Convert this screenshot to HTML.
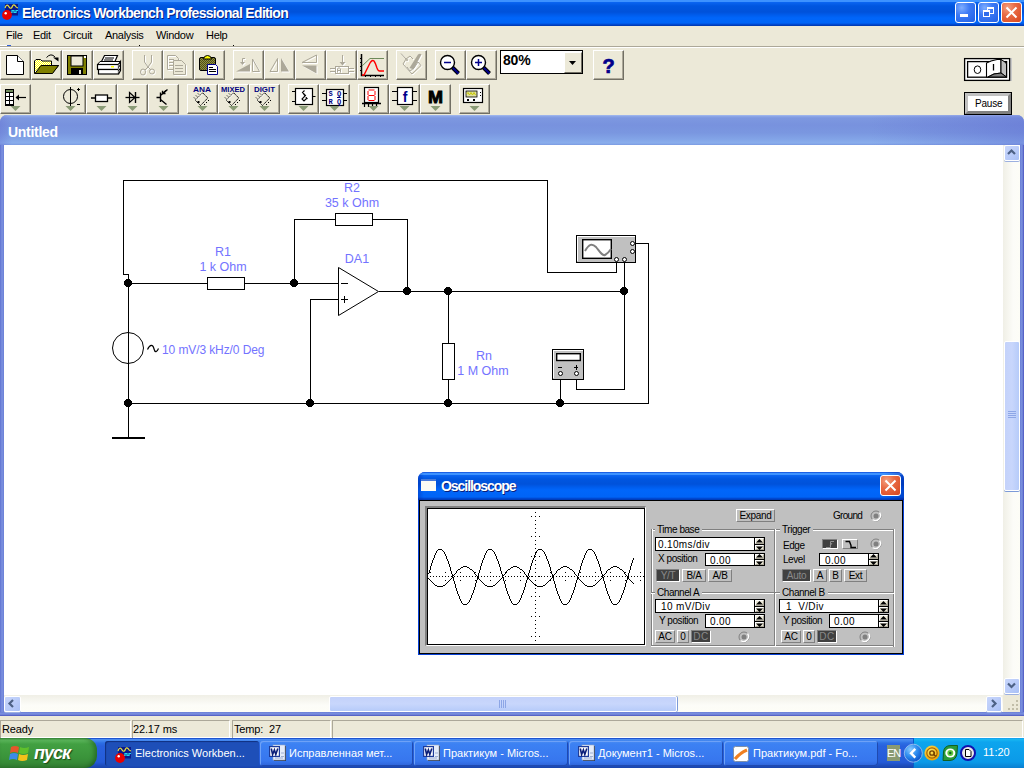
<!DOCTYPE html>
<html><head><meta charset="utf-8"><title>Electronics Workbench</title>
<style>
html,body{margin:0;padding:0;}
body{width:1024px;height:768px;position:relative;overflow:hidden;background:#ECE9D8;font-family:'Liberation Sans', sans-serif;font-size:11px;color:#000;}
div{box-sizing:border-box;}
svg{position:absolute;overflow:visible;}
.tb{position:absolute;width:31px;height:30px;background:#ECE9D8;border-top:1px solid #fff;border-left:1px solid #fff;border-right:1px solid #716F64;border-bottom:1px solid #716F64;box-shadow:inset -1px -1px 0 #ACA899;}
.mi{position:absolute;top:31px;font-size:11px;}
</style></head><body>

<div style="position:absolute;left:0px;top:0px;width:1024px;height:26px;background:linear-gradient(to bottom,#3D92FF 0px,#3D92FF 1.5px,#0A64F0 2.5px,#0056E0 6px,#0052DA 12px,#005CEC 15px,#0066FA 18px,#0064F6 23px,#0048D0 24.5px,#0036A8 26px);"></div>
<div style="position:absolute;left:22px;top:5px;white-space:nowrap;font-weight:bold;font-size:14px;color:#fff;letter-spacing:-0.68px;text-shadow:1px 1px 0 #0A1E7A;">Electronics Workbench Professional Edition</div>
<svg style="left:0;top:0" width="24" height="24"><rect x="5" y="4" width="13" height="11.5" fill="#0A1A8A"/><path d="M5 8 Q6.5 4 8 5.5 Q9 7 10 8 Q11.5 9 12.5 6 Q13.5 4 15 5.5 Q16 7.5 18 8" fill="none" stroke="#E8E040" stroke-width="1.2"/><path d="M10 12.5 H12 V10.5 H14 V12.5 H16 V10.5 H18" fill="none" stroke="#20D8F0" stroke-width="1.2"/><circle cx="7" cy="15" r="4.9" fill="#E80000"/><circle cx="5.7" cy="13.2" r="1.2" fill="#fff"/></svg>
<div style="position:absolute;left:955px;top:2px;width:21px;height:21px;border:1px solid #fff;border-radius:3px;background:radial-gradient(circle at 30% 25%,#7FAEFF 0%,#3C7AF5 40%,#2160E5 100%);"></div><div style="position:absolute;left:960px;top:14px;width:8px;height:3px;background:#fff;"></div>
<div style="position:absolute;left:978px;top:2px;width:21px;height:21px;border:1px solid #fff;border-radius:3px;background:radial-gradient(circle at 30% 25%,#7FAEFF 0%,#3C7AF5 40%,#2160E5 100%);"></div><div style="position:absolute;left:987px;top:7px;width:7px;height:7px;border:1px solid #fff;border-top-width:2px;"></div><div style="position:absolute;left:983px;top:10px;width:7px;height:7px;border:1px solid #fff;border-top-width:2px;background:#2F6CEB;"></div>
<div style="position:absolute;left:1001px;top:2px;width:21px;height:21px;border:1px solid #fff;border-radius:3px;background:radial-gradient(circle at 30% 25%,#F4A080 0%,#E86A44 40%,#D8461E 100%);"></div><svg style="left:1001px;top:2px" width="21" height="21"><path d="M5.5 5.5 L15.5 15.5 M15.5 5.5 L5.5 15.5" stroke="#fff" stroke-width="2"/></svg>
<div style="position:absolute;left:6px;top:29px;white-space:nowrap;font-size:11px;letter-spacing:-0.3px;">File</div>
<div style="position:absolute;left:33px;top:29px;white-space:nowrap;font-size:11px;letter-spacing:-0.3px;">Edit</div>
<div style="position:absolute;left:63px;top:29px;white-space:nowrap;font-size:11px;letter-spacing:-0.3px;">Circuit</div>
<div style="position:absolute;left:105px;top:29px;white-space:nowrap;font-size:11px;letter-spacing:-0.3px;">Analysis</div>
<div style="position:absolute;left:156px;top:29px;white-space:nowrap;font-size:11px;letter-spacing:-0.3px;">Window</div>
<div style="position:absolute;left:206px;top:29px;white-space:nowrap;font-size:11px;letter-spacing:-0.3px;">Help</div>
<div style="position:absolute;left:0px;top:46px;width:1024px;height:1px;background:#ACA899;"></div>
<div style="position:absolute;left:0px;top:45px;width:7px;height:1px;background:#fff;"></div>
<div style="position:absolute;left:7px;top:45px;width:4px;height:1px;background:#2F5FD8;"></div>
<div style="position:absolute;left:139px;top:45px;width:1px;height:1px;background:#000;"></div>
<div style="position:absolute;left:233px;top:45px;width:1px;height:1px;background:#000;"></div>
<div style="position:absolute;left:0px;top:47px;width:1024px;height:1px;background:#fff;"></div>
<div class="tb" style="left:0px;top:50px"></div>
<div class="tb" style="left:31px;top:50px"></div>
<div class="tb" style="left:62px;top:50px"></div>
<div class="tb" style="left:93px;top:50px"></div>
<div class="tb" style="left:132px;top:50px"></div>
<div class="tb" style="left:163px;top:50px"></div>
<div class="tb" style="left:194px;top:50px"></div>
<div class="tb" style="left:233px;top:50px"></div>
<div class="tb" style="left:264px;top:50px"></div>
<div class="tb" style="left:295px;top:50px"></div>
<div class="tb" style="left:326px;top:50px"></div>
<div class="tb" style="left:357px;top:50px"></div>
<div class="tb" style="left:396px;top:50px"></div>
<div class="tb" style="left:435px;top:50px"></div>
<div class="tb" style="left:466px;top:50px"></div>
<div class="tb" style="left:593px;top:50px"></div>
<div class="tb" style="left:0px;top:84px"></div>
<div class="tb" style="left:55px;top:84px"></div>
<div class="tb" style="left:86px;top:84px"></div>
<div class="tb" style="left:117px;top:84px"></div>
<div class="tb" style="left:148px;top:84px"></div>
<div class="tb" style="left:187px;top:84px"></div>
<div class="tb" style="left:218px;top:84px"></div>
<div class="tb" style="left:249px;top:84px"></div>
<div class="tb" style="left:288px;top:84px"></div>
<div class="tb" style="left:319px;top:84px"></div>
<div class="tb" style="left:358px;top:84px"></div>
<div class="tb" style="left:389px;top:84px"></div>
<div class="tb" style="left:420px;top:84px"></div>
<div class="tb" style="left:459px;top:84px"></div>
<svg style="left:0px;top:50px" width="31" height="30"><path d="M6.5 5.5 H17.5 L23.5 11.5 V24.5 H6.5 Z" fill="#fff" stroke="#000"/><path d="M17.5 5.5 V11.5 H23.5" fill="#fff" stroke="#000"/></svg>
<svg style="left:31px;top:50px" width="31" height="30"><defs><pattern id="chk" width="2" height="2" patternUnits="userSpaceOnUse"><rect width="2" height="2" fill="#fff"/><rect width="1" height="1" fill="#ff0"/><rect x="1" y="1" width="1" height="1" fill="#ff0"/></pattern></defs><path d="M3.5 23.5 V11 L5 9.5 H9.5 L11 11 H20.5 V15.5 H27.5 L21 23.5 Z" fill="url(#chk)" stroke="#000"/><path d="M4 23.5 L10 15.5 H27.5 L21.5 23.5 Z" fill="#808000" stroke="#000"/><path d="M15.5 7.5 Q20 2.5 24 7" fill="none" stroke="#000"/><path d="M22 7.5 H27.5 V11.5 Z" fill="#000"/></svg>
<svg style="left:62px;top:50px" width="31" height="30"><rect x="5.5" y="5.5" width="19" height="19" fill="#808000" stroke="#000"/><rect x="9" y="6" width="12" height="10" fill="#ECE9D8" stroke="#000"/><rect x="9" y="18" width="12" height="7" fill="#000"/><rect x="17" y="20" width="2" height="4" fill="#ECE9D8"/><rect x="22" y="6" width="2" height="2" fill="#fff"/></svg>
<svg style="left:93px;top:50px" width="31" height="30"><path d="M8.5 11.5 L11.5 5.5 H24.5 L22 11.5 Z" fill="#fff" stroke="#000" stroke-width="1.2"/><path d="M12 8 H21 M11 10 H20" stroke="#000" stroke-width="1"/><path d="M4.5 14.5 L7 11.5 H27.5 L25.5 14.5 Z" fill="#fff" stroke="#000"/><rect x="4.5" y="14.5" width="21" height="5" fill="#fff" stroke="#000" stroke-width="1.2"/><rect x="5.5" y="19.5" width="20" height="4.5" fill="#fff" stroke="#000" stroke-width="1.2"/><path d="M25.5 14.5 L27.5 11.5 V20.5 L25.5 24" fill="#fff" stroke="#000" stroke-width="1.2"/><path d="M25.5 17.5 L27.5 14.5 M25.5 21 L27.5 18" stroke="#000"/><rect x="18" y="16" width="3" height="1.5" fill="#ff0"/></svg>
<svg style="left:132px;top:50px" width="31" height="30"><g transform="translate(1,1)" fill="#fff" stroke="#fff"><path d="M12.5 5 V12 L16 17 M19.5 5 V12 L16 17 L13 20 M16 17 L19 20" fill="none" stroke-width="1"/><ellipse cx="11" cy="22" rx="2.5" ry="3" fill="none" stroke-width="1"/><ellipse cx="20" cy="21.5" rx="2.5" ry="2.5" fill="none" stroke-width="1"/></g><g fill="#ACA899" stroke="#ACA899"><path d="M12.5 5 V12 L16 17 M19.5 5 V12 L16 17 L13 20 M16 17 L19 20" fill="none" stroke-width="1"/><ellipse cx="11" cy="22" rx="2.5" ry="3" fill="none" stroke-width="1"/><ellipse cx="20" cy="21.5" rx="2.5" ry="2.5" fill="none" stroke-width="1"/></g></svg>
<svg style="left:163px;top:50px" width="31" height="30"><g transform="translate(1,1)" fill="#fff" stroke="#fff"><path d="M4.5 5.5 H12.5 L15.5 8.5 V19.5 H4.5 Z" fill="none" stroke-width="1"/><path d="M6 9.5h5M6 12.5h5M6 15.5h5" stroke-width="1"/><path d="M10.5 10.5 H18.5 L22.5 14.5 V24.5 H10.5 Z" fill="#ECE9D8" stroke-width="1"/><path d="M12 15.5h8M12 18.5h8M12 21.5h8" stroke-width="1"/></g><g fill="#ACA899" stroke="#ACA899"><path d="M4.5 5.5 H12.5 L15.5 8.5 V19.5 H4.5 Z" fill="none" stroke-width="1"/><path d="M6 9.5h5M6 12.5h5M6 15.5h5" stroke-width="1"/><path d="M10.5 10.5 H18.5 L22.5 14.5 V24.5 H10.5 Z" fill="#ECE9D8" stroke-width="1"/><path d="M12 15.5h8M12 18.5h8M12 21.5h8" stroke-width="1"/></g></svg>
<svg style="left:194px;top:50px" width="31" height="30"><defs><pattern id="chk2" width="2" height="2" patternUnits="userSpaceOnUse"><rect width="2" height="2" fill="#909040"/><rect width="1" height="1" fill="#505018"/><rect x="1" y="1" width="1" height="1" fill="#505018"/></pattern></defs><rect x="5.5" y="7.5" width="16" height="13" rx="1.5" fill="url(#chk2)" stroke="#000"/><path d="M9.5 9 Q10 5.5 13.5 5.5 Q17 5.5 17.5 9 Z" fill="#ff0" stroke="#000"/><path d="M13.5 14.5 H21.5 L23.5 16.5 V24.5 H13.5 Z" fill="#fff" stroke="#00008B"/><path d="M15 17.5h4M15 19.5h7M15 21.5h7" stroke="#000"/></svg>
<svg style="left:233px;top:50px" width="31" height="30"><g transform="translate(1,1)" fill="#fff" stroke="#fff"><path d="M3 21.5 H17 V14 Z" stroke="none"/><path d="M19.5 21.5 V9 L26.5 21.5 Z" fill="none" stroke-width="1"/><path d="M12 8.5 H9.5 V12.5" fill="none" stroke-width="1"/><path d="M7 12 H12 L9.5 15 Z" stroke="none"/></g><g fill="#ACA899" stroke="#ACA899"><path d="M3 21.5 H17 V14 Z" stroke="none"/><path d="M19.5 21.5 V9 L26.5 21.5 Z" fill="none" stroke-width="1"/><path d="M12 8.5 H9.5 V12.5" fill="none" stroke-width="1"/><path d="M7 12 H12 L9.5 15 Z" stroke="none"/></g></svg>
<svg style="left:264px;top:50px" width="31" height="30"><g transform="translate(1,1)" fill="#fff" stroke="#fff"><path d="M6 21.5 H13.5 V8.5 Z" fill="none" stroke-width="1"/><path d="M17 8 V21.5 H25 Z" stroke="none"/></g><g fill="#ACA899" stroke="#ACA899"><path d="M6 21.5 H13.5 V8.5 Z" fill="none" stroke-width="1"/><path d="M17 8 V21.5 H25 Z" stroke="none"/></g></svg>
<svg style="left:295px;top:50px" width="31" height="30"><g transform="translate(1,1)" fill="#fff" stroke="#fff"><path d="M7 12.5 H21.5 V5 Z" fill="none" stroke-width="1"/><path d="M7 15.5 H21.5 V23.5 Z" stroke="none"/></g><g fill="#ACA899" stroke="#ACA899"><path d="M7 12.5 H21.5 V5 Z" fill="none" stroke-width="1"/><path d="M7 15.5 H21.5 V23.5 Z" stroke="none"/></g></svg>
<svg style="left:326px;top:50px" width="31" height="30"><g transform="translate(1,1)" fill="#fff" stroke="#fff"><path d="M16.5 5 V14" fill="none" stroke-width="1"/><path d="M13.5 12 H19.5 L16.5 15.5 Z" stroke="none"/><rect x="9.5" y="16.5" width="13" height="7" fill="none" stroke-width="1"/><path d="M4 18.5h5M4 21.5h5M23 18.5h5M23 21.5h5" stroke-width="1"/><path d="M11.5 22.5 V19 L13 17.5 L14.5 19 V22.5 M11.5 20.5 H14.5" fill="none" stroke-width="1"/></g><g fill="#ACA899" stroke="#ACA899"><path d="M16.5 5 V14" fill="none" stroke-width="1"/><path d="M13.5 12 H19.5 L16.5 15.5 Z" stroke="none"/><rect x="9.5" y="16.5" width="13" height="7" fill="none" stroke-width="1"/><path d="M4 18.5h5M4 21.5h5M23 18.5h5M23 21.5h5" stroke-width="1"/><path d="M11.5 22.5 V19 L13 17.5 L14.5 19 V22.5 M11.5 20.5 H14.5" fill="none" stroke-width="1"/></g></svg>
<svg style="left:357px;top:50px" width="31" height="30"><path d="M4.5 4 V25.5 H27" fill="none" stroke="#000" stroke-width="1.5"/><path d="M3 8.5h2M3 12.5h2M3 16.5h2M3 20.5h2M8.5 25v2M13.5 25v2M18.5 25v2M23.5 25v2" stroke="#000"/><path d="M5 16 L13 8.5 H27" fill="none" stroke="#6E8A5A" stroke-width="1"/><path d="M5 25 H7 L13 13 Q15 9.5 17 11 Q18.5 13 20 18 Q21 21 22.5 21 H27" fill="none" stroke="#f00" stroke-width="1.4"/></svg>
<svg style="left:396px;top:50px" width="31" height="30"><g transform="translate(1,1)" fill="#fff" stroke="#fff"><path d="M5 3.5 L10 9 L7 14 L16 24 L25 15.5 L22 12 L18 18 L14 21 L11 17" fill="none" stroke-width="1"/><path d="M10 9 L14 6 L17 9" fill="none" stroke-width="1"/><circle cx="11" cy="10" r="1" stroke="none"/><path d="M13.5 18 L22 4.5 Q24 3 25.5 4.5 L17.5 19.5 Z" stroke="none"/></g><g fill="#ACA899" stroke="#ACA899"><path d="M5 3.5 L10 9 L7 14 L16 24 L25 15.5 L22 12 L18 18 L14 21 L11 17" fill="none" stroke-width="1"/><path d="M10 9 L14 6 L17 9" fill="none" stroke-width="1"/><circle cx="11" cy="10" r="1" stroke="none"/><path d="M13.5 18 L22 4.5 Q24 3 25.5 4.5 L17.5 19.5 Z" stroke="none"/></g></svg>
<svg style="left:435px;top:50px" width="31" height="30"><path d="M17 17 L23.5 23.5" stroke="#000" stroke-width="4"/><path d="M17 17 L23.5 23.5" stroke="#00008B" stroke-width="2"/><circle cx="12.5" cy="12.5" r="7" fill="#fff" stroke="#000" stroke-width="1.4"/><path d="M9 12.5 H16" stroke="#00008B" stroke-width="1.5"/></svg>
<svg style="left:466px;top:50px" width="31" height="30"><path d="M17 17 L23.5 23.5" stroke="#000" stroke-width="4"/><path d="M17 17 L23.5 23.5" stroke="#00008B" stroke-width="2"/><circle cx="12.5" cy="12.5" r="7" fill="#fff" stroke="#000" stroke-width="1.4"/><path d="M9 12.5 H16 M12.5 9 V16" stroke="#00008B" stroke-width="1.5"/></svg>
<svg style="left:593px;top:50px" width="31" height="30"><text x="15.5" y="23" text-anchor="middle" font-family="Liberation Sans" font-weight="bold" font-size="20" fill="#00008B" stroke="#00008B" stroke-width="0.7">?</text></svg>
<svg style="left:0px;top:84px" width="31" height="30"><rect x="5" y="5" width="9" height="17" fill="#000"/><rect x="6" y="6" width="7" height="2" fill="#6E8A5A"/><rect x="6" y="9" width="3" height="3" fill="#fff"/><rect x="6" y="13" width="3" height="3" fill="#fff"/><rect x="6" y="17" width="3" height="3" fill="#fff"/><rect x="10" y="9" width="3" height="3" fill="#fff"/><rect x="10" y="13" width="3" height="3" fill="#fff"/><rect x="10" y="17" width="3" height="3" fill="#fff"/><path d="M16 13.5 H26" stroke="#000" stroke-width="1.2"/><path d="M15.5 13.5 L19 10.5 V16.5 Z" fill="#000"/><path d="M10.5 22 H20.5 L15.5 27 Z" fill="#8A9B76"/></svg>
<svg style="left:55px;top:84px" width="31" height="30"><circle cx="15.5" cy="12.5" r="7" fill="none" stroke="#000" stroke-width="1"/><path d="M15.5 3 V22" stroke="#000" stroke-width="1"/><path d="M22 5.5h3M23.5 4v3M22 20.5h3" stroke="#000" stroke-width="1"/><path d="M10.5 22 H20.5 L15.5 27 Z" fill="#8A9B76"/></svg>
<svg style="left:86px;top:84px" width="31" height="30"><path d="M5 14 H9 M21.5 14 H26" stroke="#000" stroke-width="1.3"/><rect x="9.5" y="11" width="12" height="6.5" fill="#fff" stroke="#000" stroke-width="1.3"/><path d="M10.5 22 H20.5 L15.5 27 Z" fill="#8A9B76"/></svg>
<svg style="left:117px;top:84px" width="31" height="30"><path d="M8.5 13.5 H22.5" stroke="#000" stroke-width="1.3"/><path d="M12.5 8.5 L18 13.5 L12.5 18.5 Z" fill="none" stroke="#000" stroke-width="1.2"/><path d="M18.5 8 V19" stroke="#000" stroke-width="1.4"/><path d="M10.5 22 H20.5 L15.5 27 Z" fill="#8A9B76"/></svg>
<svg style="left:148px;top:84px" width="31" height="30"><path d="M8.5 13.5 H12.5 M12.5 8.5 V18 M12.5 11.5 L19.5 5.5 M12.5 15.5 L18.5 20.5" stroke="#000" stroke-width="1.4"/><path d="M14.5 9.5 L18 6.5 M14.5 9.5 H17.5 M14.5 9.5 V6.8" stroke="#000" stroke-width="1.3"/><path d="M10.5 22 H20.5 L15.5 27 Z" fill="#8A9B76"/></svg>
<svg style="left:187px;top:84px" width="31" height="30"><text x="6" y="8.3" font-family="Liberation Sans" font-weight="bold" font-size="7.2" fill="#000080" textLength="18" lengthAdjust="spacingAndGlyphs">ANA</text><path d="M15.7 8.8 L20.8 14 L13.5 21.5 L8.2 16.2 Z" fill="#ECE9D8" stroke="#000" stroke-width="1" stroke-dasharray="1.5 0.6"/><path d="M9.5 16 L15.5 10" stroke="#fff" stroke-width="1"/><path d="M12 10.5 l-1 -1 M10 12.5 l-1 -1 M8 14.5 l-1 -1 M21 16 l1 1 M19 18 l1 1 M17 20 l1 1" stroke="#000" stroke-width="1"/><rect x="10.5" y="17" width="2" height="2" fill="#000"/><path d="M10.5 22 H20.5 L15.5 27 Z" fill="#8A9B76"/></svg>
<svg style="left:218px;top:84px" width="31" height="30"><text x="3" y="8.3" font-family="Liberation Sans" font-weight="bold" font-size="7.2" fill="#000080" textLength="24" lengthAdjust="spacingAndGlyphs">MIXED</text><path d="M15.7 8.8 L20.8 14 L13.5 21.5 L8.2 16.2 Z" fill="#ECE9D8" stroke="#000" stroke-width="1" stroke-dasharray="1.5 0.6"/><path d="M9.5 16 L15.5 10" stroke="#fff" stroke-width="1"/><path d="M12 10.5 l-1 -1 M10 12.5 l-1 -1 M8 14.5 l-1 -1 M21 16 l1 1 M19 18 l1 1 M17 20 l1 1" stroke="#000" stroke-width="1"/><rect x="10.5" y="17" width="2" height="2" fill="#000"/><path d="M10.5 22 H20.5 L15.5 27 Z" fill="#8A9B76"/></svg>
<svg style="left:249px;top:84px" width="31" height="30"><text x="5" y="8.3" font-family="Liberation Sans" font-weight="bold" font-size="7.2" fill="#000080" textLength="21" lengthAdjust="spacingAndGlyphs">DIGIT</text><path d="M15.7 8.8 L20.8 14 L13.5 21.5 L8.2 16.2 Z" fill="#ECE9D8" stroke="#000" stroke-width="1" stroke-dasharray="1.5 0.6"/><path d="M9.5 16 L15.5 10" stroke="#fff" stroke-width="1"/><path d="M12 10.5 l-1 -1 M10 12.5 l-1 -1 M8 14.5 l-1 -1 M21 16 l1 1 M19 18 l1 1 M17 20 l1 1" stroke="#000" stroke-width="1"/><rect x="10.5" y="17" width="2" height="2" fill="#000"/><path d="M10.5 22 H20.5 L15.5 27 Z" fill="#8A9B76"/></svg>
<svg style="left:288px;top:84px" width="31" height="30"><rect x="7.5" y="4.5" width="17" height="16" fill="#fff" stroke="#000" stroke-width="1.2"/><path d="M4 7.5h3.5M4 17.5h3.5M24.5 12.5h3" stroke="#000" stroke-width="1.2"/><path d="M16.5 6.5 L14.5 8.5 L17.5 11.5 L14 15 L16 17 L18.5 14.5 M15.5 10 L19.5 15" fill="none" stroke="#000" stroke-width="1.1"/><path d="M10.5 22 H20.5 L15.5 27 Z" fill="#8A9B76"/></svg>
<svg style="left:319px;top:84px" width="31" height="30"><rect x="7.5" y="5.5" width="17" height="16" fill="#fff" stroke="#000" stroke-width="1.2"/><path d="M3 9.5h4.5M3 16.5h4.5M24.5 9.5h3.5M24.5 16.5h3.5" stroke="#000" stroke-width="1.2"/><text x="9.5" y="12" font-family="Liberation Mono" font-weight="bold" font-size="7" fill="#000080">S Q</text><text x="9.5" y="19.5" font-family="Liberation Mono" font-weight="bold" font-size="7" fill="#000080">R Q</text><path d="M18 13.5h3" stroke="#000080"/><path d="M10.5 22 H20.5 L15.5 27 Z" fill="#8A9B76"/></svg>
<svg style="left:358px;top:84px" width="31" height="30"><rect x="6.5" y="3.5" width="14" height="15" fill="#fff" stroke="#000" stroke-width="1.2"/><path d="M4 19.5 H23" stroke="#000" stroke-width="1.5"/><path d="M6.5 20 V23 M10.5 20 V23 M14.5 20 V23 M18.5 20 V23" stroke="#000" stroke-width="1.2"/><path d="M10.5 6h6M10 7v4M17 7v4M10.5 11.5h6M10 12v4M17 12v4M10.5 16.5h6" stroke="#f00" stroke-width="1"/><path d="M10.5 22 H20.5 L15.5 27 Z" fill="#8A9B76"/></svg>
<svg style="left:389px;top:84px" width="31" height="30"><rect x="8.5" y="3.5" width="15" height="17" fill="#fff" stroke="#000" stroke-width="1.2"/><path d="M3 7.5h5.5M3 16.5h5.5M23.5 7.5h4.5M23.5 16.5h4.5" stroke="#000" stroke-width="1.2"/><text x="16" y="17.5" text-anchor="middle" font-family="Liberation Sans" font-weight="bold" font-size="14" fill="#00008B">f</text><path d="M10.5 22 H20.5 L15.5 27 Z" fill="#8A9B76"/></svg>
<svg style="left:420px;top:84px" width="31" height="30"><text x="15.5" y="19" text-anchor="middle" font-family="Liberation Sans" font-weight="bold" font-size="17" fill="#000" stroke="#000" stroke-width="0.9" textLength="15" lengthAdjust="spacingAndGlyphs">M</text><path d="M10.5 22 H20.5 L15.5 27 Z" fill="#8A9B76"/></svg>
<svg style="left:459px;top:84px" width="31" height="30"><rect x="4.5" y="4.5" width="19" height="14" fill="#fff" stroke="#000" stroke-width="1.2"/><rect x="7" y="7" width="11" height="6" fill="#DFE0A0" stroke="#000" stroke-width="0.8"/><path d="M7.5 10 L9 8.5 L10.5 11 L12 8.5 L13.5 11 L15 8.5 L16.5 11" fill="none" stroke="#C8C800" stroke-width="1"/><rect x="8" y="15" width="2" height="2" fill="#000"/><rect x="14" y="15" width="2" height="2" fill="#000"/><rect x="21" y="8" width="1" height="1" fill="#000"/><rect x="21" y="11" width="1" height="1" fill="#000"/><path d="M10.5 22 H20.5 L15.5 27 Z" fill="#8A9B76"/></svg>
<div style="position:absolute;left:500px;top:50px;width:83px;height:24px;background:#fff;border:1px solid #000;"></div>
<div style="position:absolute;left:503px;top:52px;white-space:nowrap;font-weight:bold;font-size:14px;letter-spacing:-0.2px;">80%</div>
<div style="position:absolute;left:564px;top:52px;width:18px;height:21px;background:#ECE9D8;border-top:1px solid #fff;border-left:1px solid #fff;border-right:1px solid #716F64;border-bottom:1px solid #716F64;"></div>
<svg style="left:564px;top:52px" width="18" height="21"><path d="M5 9 H12 L8.5 13 Z" fill="#000"/></svg>
<svg style="left:964px;top:58px" width="50" height="24"><rect x="46" y="0" width="2" height="23" fill="#C8C8C8"/><rect x="0.6" y="0.6" width="45" height="21.8" fill="#fff" stroke="#000" stroke-width="1.3"/><rect x="3.6" y="3.6" width="39" height="15.6" fill="#fff" stroke="#000" stroke-width="1.3"/><ellipse cx="13.5" cy="11.7" rx="3.3" ry="3.8" fill="none" stroke="#000" stroke-width="1"/><path d="M22.5 19 V5 L27 3 L33 1.5 L37 1.5 L37 15 L30 16 L24 19 Z" fill="#fff" stroke="#000" stroke-width="1.1"/><path d="M37 1.5 L41 4 L42.5 6 L42.5 19 L37 15 Z" fill="#C0C0C0" stroke="#000" stroke-width="1"/><path d="M24 19 L30 16 L37 15 L42.5 19 Z" fill="#808080" stroke="#000" stroke-width="1"/><path d="M29.5 6 V12.5" stroke="#000" stroke-width="1.3"/></svg>
<div style="position:absolute;left:964px;top:92px;width:48px;height:23px;background:#fff;border:1px solid #000;"></div>
<div style="position:absolute;left:965px;top:93px;width:46px;height:21px;border:3px solid;border-color:#C0C0C0 #808080 #808080 #C0C0C0;"></div>
<div style="position:absolute;left:975px;top:98px;white-space:nowrap;font-size:10px;letter-spacing:-0.2px;">Pause</div>
<div style="position:absolute;left:0px;top:115px;width:1024px;height:601px;background:#6F83D8;border-radius:7px 7px 0 0;"></div>
<div style="position:absolute;left:0px;top:115px;width:1024px;height:30px;border-radius:7px 7px 0 0;background:linear-gradient(to bottom,#A9BFF0 0px,#8FA8E8 1px,#7D98E0 3px,#7892DE 10px,#7A97E0 18px,#84A6E8 25px,#8AAEEC 28px,#7B9AE2 30px);"></div>
<div style="position:absolute;left:0px;top:115px;width:1024px;height:30px;border-radius:7px 7px 0 0;background:linear-gradient(to right,rgba(100,110,210,0.35) 0px,rgba(100,110,210,0) 12px,rgba(100,110,210,0) 85%,rgba(90,100,205,0.35) 100%);"></div>
<div style="position:absolute;left:8px;top:124px;white-space:nowrap;font-weight:bold;font-size:14px;color:#fff;letter-spacing:-0.3px;">Untitled</div>
<div style="position:absolute;left:0px;top:145px;width:4px;height:571px;background:linear-gradient(to right,#5F72D0,#7C92E0 50%,#6A7FD6);"></div>
<div style="position:absolute;left:1020px;top:145px;width:4px;height:571px;background:linear-gradient(to right,#6A7FD6,#7C92E0 50%,#4A54BE);"></div>
<div style="position:absolute;left:0px;top:712px;width:1024px;height:4px;background:linear-gradient(to bottom,#6A7FD6,#7C92E0 50%,#4A54BE);"></div>
<div style="position:absolute;left:4px;top:145px;width:999px;height:550px;background:#fff;"></div>
<div style="position:absolute;left:1003px;top:145px;width:17px;height:550px;background:linear-gradient(to right,#F0EFE6,#FCFCF8 60%,#FDFDF6);"></div>
<div style="position:absolute;left:4px;top:695px;width:999px;height:17px;background:linear-gradient(to bottom,#F0EFE6,#FCFCF8 60%,#FDFDF6);"></div>
<div style="position:absolute;left:1003px;top:695px;width:17px;height:17px;background:#ECE9D8;"></div>
<div style="position:absolute;left:1016px;top:700px;width:2px;height:2px;background:#C1BDA8;"></div>
<div style="position:absolute;left:1012px;top:704px;width:2px;height:2px;background:#C1BDA8;"></div>
<div style="position:absolute;left:1016px;top:704px;width:2px;height:2px;background:#C1BDA8;"></div>
<div style="position:absolute;left:1008px;top:708px;width:2px;height:2px;background:#C1BDA8;"></div>
<div style="position:absolute;left:1012px;top:708px;width:2px;height:2px;background:#C1BDA8;"></div>
<div style="position:absolute;left:1016px;top:708px;width:2px;height:2px;background:#C1BDA8;"></div>
<div style="position:absolute;left:1004px;top:145px;width:16px;height:16px;border:1px solid #fff;border-radius:2px;background:linear-gradient(135deg,#C8D6FB 0%,#BACCF9 50%,#A9C0F6 100%);box-shadow:0 1px 0 #9CB0E0;"></div><svg style="left:1004px;top:145px" width="16" height="16"><path d="M4 9 L7.5 5.5 L11 9" fill="none" stroke="#4D6185" stroke-width="2.2"/></svg>
<div style="position:absolute;left:1004px;top:678px;width:16px;height:16px;border:1px solid #fff;border-radius:2px;background:linear-gradient(135deg,#C8D6FB 0%,#BACCF9 50%,#A9C0F6 100%);box-shadow:0 1px 0 #9CB0E0;"></div><svg style="left:1004px;top:678px" width="16" height="16"><path d="M4 5.5 L7.5 9 L11 5.5" fill="none" stroke="#4D6185" stroke-width="2.2"/></svg>
<div style="position:absolute;left:4px;top:696px;width:17px;height:16px;border:1px solid #fff;border-radius:2px;background:linear-gradient(135deg,#C8D6FB 0%,#BACCF9 50%,#A9C0F6 100%);box-shadow:0 1px 0 #9CB0E0;"></div><svg style="left:4px;top:696px" width="17" height="16"><path d="M9 4 L5.5 7.5 L9 11" fill="none" stroke="#4D6185" stroke-width="2.2"/></svg>
<div style="position:absolute;left:986px;top:696px;width:16px;height:16px;border:1px solid #fff;border-radius:2px;background:linear-gradient(135deg,#C8D6FB 0%,#BACCF9 50%,#A9C0F6 100%);box-shadow:0 1px 0 #9CB0E0;"></div><svg style="left:986px;top:696px" width="16" height="16"><path d="M6 4 L9.5 7.5 L6 11" fill="none" stroke="#4D6185" stroke-width="2.2"/></svg>
<div style="position:absolute;left:1004px;top:341px;width:16px;height:150px;border:1px solid #fff;border-radius:2px;background:linear-gradient(to right,#C4D2FA,#C8D6FC 50%,#B6CBF9);box-shadow:0 1px 0 #7C9AD8;"></div>
<div style="position:absolute;left:1008px;top:411px;width:8px;height:1px;background:#8DA6E6;"></div>
<div style="position:absolute;left:1008px;top:413px;width:8px;height:1px;background:#8DA6E6;"></div>
<div style="position:absolute;left:1008px;top:415px;width:8px;height:1px;background:#8DA6E6;"></div>
<div style="position:absolute;left:1008px;top:417px;width:8px;height:1px;background:#8DA6E6;"></div>
<div style="position:absolute;left:329px;top:696px;width:348px;height:16px;border:1px solid #fff;border-radius:2px;background:linear-gradient(to bottom,#C4D2FA,#C8D6FC 50%,#B6CBF9);box-shadow:1px 0 0 #7C9AD8;"></div>
<div style="position:absolute;left:499px;top:700px;width:1px;height:8px;background:#8DA6E6;"></div>
<div style="position:absolute;left:501px;top:700px;width:1px;height:8px;background:#8DA6E6;"></div>
<div style="position:absolute;left:503px;top:700px;width:1px;height:8px;background:#8DA6E6;"></div>
<div style="position:absolute;left:505px;top:700px;width:1px;height:8px;background:#8DA6E6;"></div>
<div style="position:absolute;left:0px;top:716px;width:1024px;height:22px;background:#ECE9D8;"></div>
<div style="position:absolute;left:0px;top:737px;width:1024px;height:1px;background:#fff;"></div>
<div style="position:absolute;left:0px;top:720px;width:131px;height:18px;border-top:1px solid #ACA899;border-left:1px solid #ACA899;border-right:1px solid #fff;"></div>
<div style="position:absolute;left:132px;top:720px;width:98px;height:18px;border-top:1px solid #ACA899;border-left:1px solid #ACA899;border-right:1px solid #fff;"></div>
<div style="position:absolute;left:232px;top:720px;width:99px;height:18px;border-top:1px solid #ACA899;border-left:1px solid #ACA899;border-right:1px solid #fff;"></div>
<div style="position:absolute;left:332px;top:720px;width:691px;height:18px;border-top:1px solid #ACA899;border-left:1px solid #ACA899;border-right:1px solid #fff;"></div>
<div style="position:absolute;left:2px;top:723px;white-space:nowrap;font-size:11px;letter-spacing:-0.15px;">Ready</div>
<div style="position:absolute;left:133px;top:723px;white-space:nowrap;font-size:11px;letter-spacing:-0.15px;">22.17 ms</div>
<div style="position:absolute;left:234px;top:723px;white-space:nowrap;font-size:11px;letter-spacing:-0.15px;">Temp:&nbsp; 27</div>
<svg style="left:0;top:0" width="1024" height="768"><path d="M616.5 259.5 L616.5 272.5 L547.5 272.5 L547.5 180.5 L123.5 180.5 L123.5 274.5 L128.5 274.5 L128.5 283.5" fill="none" stroke="#000" stroke-width="1" shape-rendering="crispEdges"/><path d="M128.5 283.5 L207.5 283.5" fill="none" stroke="#000" stroke-width="1" shape-rendering="crispEdges"/><path d="M244.5 283.5 L338.5 283.5" fill="none" stroke="#000" stroke-width="1" shape-rendering="crispEdges"/><path d="M294.5 283.5 L294.5 219.5 L335.5 219.5" fill="none" stroke="#000" stroke-width="1" shape-rendering="crispEdges"/><path d="M372.5 219.5 L407.5 219.5 L407.5 291.5" fill="none" stroke="#000" stroke-width="1" shape-rendering="crispEdges"/><path d="M378.5 291.5 L624.5 291.5" fill="none" stroke="#000" stroke-width="1" shape-rendering="crispEdges"/><path d="M338.5 299.5 L310.5 299.5 L310.5 403.5" fill="none" stroke="#000" stroke-width="1" shape-rendering="crispEdges"/><path d="M128.5 283.5 L128.5 437.5" fill="none" stroke="#000" stroke-width="1" shape-rendering="crispEdges"/><path d="M128.5 403.5 L648.5 403.5 L648.5 243.5 L634.5 243.5" fill="none" stroke="#000" stroke-width="1" shape-rendering="crispEdges"/><path d="M448.5 291.5 L448.5 343.5" fill="none" stroke="#000" stroke-width="1" shape-rendering="crispEdges"/><path d="M448.5 379.5 L448.5 403.5" fill="none" stroke="#000" stroke-width="1" shape-rendering="crispEdges"/><path d="M624.5 259.5 L624.5 389.5 L576.5 389.5 L576.5 374.5" fill="none" stroke="#000" stroke-width="1" shape-rendering="crispEdges"/><path d="M560.5 374.5 L560.5 403.5" fill="none" stroke="#000" stroke-width="1" shape-rendering="crispEdges"/><rect x="207.5" y="277.5" width="37" height="12" fill="#fff" stroke="#000" stroke-width="1" shape-rendering="crispEdges"/><rect x="335.5" y="213.5" width="37" height="12" fill="#fff" stroke="#000" stroke-width="1" shape-rendering="crispEdges"/><rect x="442.5" y="343.5" width="12" height="36" fill="#fff" stroke="#000" stroke-width="1" shape-rendering="crispEdges"/><rect x="112" y="437" width="33" height="2" fill="#000"/><circle cx="128" cy="348" r="15.5" fill="none" stroke="#000" stroke-width="1"/><path d="M147.5 349.5 C150 344,153 344,154 349 C155 353,157 352,158.5 348.5" fill="none" stroke="#000" stroke-width="1.2"/><path d="M338.5 267.5 L338.5 315.5 L378.5 291.5 Z" fill="#fff" stroke="#000" stroke-width="1"/><path d="M341 283.5 H348 M341 299.5 H348 M344.5 296 V303" stroke="#000" stroke-width="1" shape-rendering="crispEdges"/><path d="M126 279h4v1h-4zM125 280h6v1h-6zM124 281h8v1h-8zM124 282h8v1h-8zM124 283h8v1h-8zM124 284h8v1h-8zM125 285h6v1h-6zM126 286h4v1h-4z" fill="#000" shape-rendering="crispEdges"/><path d="M292 279h4v1h-4zM291 280h6v1h-6zM290 281h8v1h-8zM290 282h8v1h-8zM290 283h8v1h-8zM290 284h8v1h-8zM291 285h6v1h-6zM292 286h4v1h-4z" fill="#000" shape-rendering="crispEdges"/><path d="M405 287h4v1h-4zM404 288h6v1h-6zM403 289h8v1h-8zM403 290h8v1h-8zM403 291h8v1h-8zM403 292h8v1h-8zM404 293h6v1h-6zM405 294h4v1h-4z" fill="#000" shape-rendering="crispEdges"/><path d="M446 287h4v1h-4zM445 288h6v1h-6zM444 289h8v1h-8zM444 290h8v1h-8zM444 291h8v1h-8zM444 292h8v1h-8zM445 293h6v1h-6zM446 294h4v1h-4z" fill="#000" shape-rendering="crispEdges"/><path d="M622 287h4v1h-4zM621 288h6v1h-6zM620 289h8v1h-8zM620 290h8v1h-8zM620 291h8v1h-8zM620 292h8v1h-8zM621 293h6v1h-6zM622 294h4v1h-4z" fill="#000" shape-rendering="crispEdges"/><path d="M126 399h4v1h-4zM125 400h6v1h-6zM124 401h8v1h-8zM124 402h8v1h-8zM124 403h8v1h-8zM124 404h8v1h-8zM125 405h6v1h-6zM126 406h4v1h-4z" fill="#000" shape-rendering="crispEdges"/><path d="M308 399h4v1h-4zM307 400h6v1h-6zM306 401h8v1h-8zM306 402h8v1h-8zM306 403h8v1h-8zM306 404h8v1h-8zM307 405h6v1h-6zM308 406h4v1h-4z" fill="#000" shape-rendering="crispEdges"/><path d="M446 399h4v1h-4zM445 400h6v1h-6zM444 401h8v1h-8zM444 402h8v1h-8zM444 403h8v1h-8zM444 404h8v1h-8zM445 405h6v1h-6zM446 406h4v1h-4z" fill="#000" shape-rendering="crispEdges"/><path d="M558 399h4v1h-4zM557 400h6v1h-6zM556 401h8v1h-8zM556 402h8v1h-8zM556 403h8v1h-8zM556 404h8v1h-8zM557 405h6v1h-6zM558 406h4v1h-4z" fill="#000" shape-rendering="crispEdges"/><rect x="576.5" y="235.5" width="59" height="27" fill="#C0C0C0" stroke="#000" stroke-width="1" shape-rendering="crispEdges"/><path d="M577.5 261 V236.5 H635" fill="none" stroke="#fff" stroke-width="1" shape-rendering="crispEdges"/><rect x="582.7" y="239.7" width="28.6" height="18.6" fill="#fff" stroke="#000" stroke-width="1.4"/><path d="M585 251 C589 244,592 243,596 247 C600 252,602 256,605 255 C607 254,609 252,611 249" fill="none" stroke="#808080" stroke-width="2"/><circle cx="616.5" cy="259.5" r="2" fill="#fff" stroke="#000" stroke-width="1"/><circle cx="624.5" cy="259.5" r="2" fill="#fff" stroke="#000" stroke-width="1"/><circle cx="632.5" cy="243.5" r="2" fill="#fff" stroke="#000" stroke-width="1"/><circle cx="632.5" cy="251.5" r="2" fill="#fff" stroke="#000" stroke-width="1"/><rect x="552.5" y="349.5" width="31" height="30" fill="#C0C0C0" stroke="#000" stroke-width="1" shape-rendering="crispEdges"/><path d="M553.5 378 V350.5 H583" fill="none" stroke="#fff" stroke-width="1" shape-rendering="crispEdges"/><rect x="556.7" y="353.7" width="23.6" height="6.8" fill="#fff" stroke="#000" stroke-width="1.4"/><path d="M558 367.5 H562 M574 367.5 H578 M576.5 365 V370" stroke="#000" stroke-width="1" shape-rendering="crispEdges"/><circle cx="560.5" cy="373.5" r="2" fill="#fff" stroke="#000" stroke-width="1"/><circle cx="576.5" cy="373.5" r="2" fill="#fff" stroke="#000" stroke-width="1"/></svg>
<div style="position:absolute;left:123px;top:245px;width:200px;text-align:center;white-space:nowrap;font-size:12.5px;color:#7373FF;line-height:15px;">R1</div>
<div style="position:absolute;left:123px;top:260px;width:200px;text-align:center;white-space:nowrap;font-size:12.5px;color:#7373FF;line-height:15px;">1 k Ohm</div>
<div style="position:absolute;left:252px;top:181px;width:200px;text-align:center;white-space:nowrap;font-size:12.5px;color:#7373FF;line-height:15px;">R2</div>
<div style="position:absolute;left:252px;top:196px;width:200px;text-align:center;white-space:nowrap;font-size:12.5px;color:#7373FF;line-height:15px;">35 k Ohm</div>
<div style="position:absolute;left:257px;top:252px;width:200px;text-align:center;white-space:nowrap;font-size:12.5px;color:#7373FF;line-height:15px;">DA1</div>
<div style="position:absolute;left:384px;top:349px;width:200px;text-align:center;white-space:nowrap;font-size:12.5px;color:#7373FF;line-height:15px;">Rn</div>
<div style="position:absolute;left:383px;top:364px;width:200px;text-align:center;white-space:nowrap;font-size:12.5px;color:#7373FF;line-height:15px;">1 M Ohm</div>
<div style="position:absolute;left:162px;top:343px;white-space:nowrap;font-size:12.5px;color:#7373FF;line-height:15px;font-size:12px;letter-spacing:-0.1px;">10 mV/3 kHz/0 Deg</div>
<div style="position:absolute;left:418px;top:472px;width:486px;height:183px;background:#0842D8;border-radius:7px 7px 0 0;"></div>
<div style="position:absolute;left:418px;top:472px;width:486px;height:28px;border-radius:7px 7px 0 0;background:linear-gradient(to bottom,#0A48D8 0px,#3D92FF 1.5px,#3D92FF 2.5px,#0A64F0 3.5px,#0056E0 7px,#0052DA 12px,#005CEC 15px,#0066FA 18px,#0064F6 25px,#0048D0 26.5px,#0038B0 28px);"></div>
<div style="position:absolute;left:418px;top:472px;width:486px;height:28px;border-radius:7px 7px 0 0;background:linear-gradient(to right,rgba(0,30,160,0.35) 0px,rgba(0,30,160,0) 6px,rgba(0,30,160,0) 96%,rgba(0,20,140,0.4) 100%);"></div>
<div style="position:absolute;left:421px;top:479px;width:15px;height:12px;background:#FCFCF4;border-top:2px solid #4A7BD8;"></div>
<div style="position:absolute;left:441px;top:478px;white-space:nowrap;font-weight:bold;font-size:14px;color:#fff;letter-spacing:-1.05px;text-shadow:1px 1px 0 #0A1E7A;">Oscilloscope</div>
<div style="position:absolute;left:880px;top:475px;width:21px;height:21px;border:1px solid #fff;border-radius:3px;background:radial-gradient(circle at 30% 25%,#F4A080 0%,#E86A44 40%,#D8461E 100%);"></div><svg style="left:880px;top:475px" width="21" height="21"><path d="M5.5 5.5 L15.5 15.5 M15.5 5.5 L5.5 15.5" stroke="#fff" stroke-width="2"/></svg>
<div style="position:absolute;left:419px;top:500px;width:484px;height:154px;background:#000;"></div>
<div style="position:absolute;left:420px;top:501px;width:482px;height:152px;background:#C0C0C0;"></div>
<div style="position:absolute;left:425px;top:506px;width:221px;height:140px;border-top:2px solid #808080;border-left:2px solid #808080;border-right:1px solid #fff;border-bottom:1px solid #fff;"></div>
<div style="position:absolute;left:427px;top:508px;width:218px;height:137px;background:#fff;border:1px solid #000;"></div>
<svg style="left:0;top:0" width="1024" height="768"><path d="M430 576h1v1h-1zM433 576h1v1h-1zM436 576h1v1h-1zM439 576h1v1h-1zM442 576h1v1h-1zM445 576h1v1h-1zM448 576h1v1h-1zM451 576h1v1h-1zM454 576h1v1h-1zM457 576h1v1h-1zM460 576h1v1h-1zM463 576h1v1h-1zM466 576h1v1h-1zM469 576h1v1h-1zM472 576h1v1h-1zM475 576h1v1h-1zM478 576h1v1h-1zM481 576h1v1h-1zM484 576h1v1h-1zM487 576h1v1h-1zM490 576h1v1h-1zM493 576h1v1h-1zM496 576h1v1h-1zM499 576h1v1h-1zM502 576h1v1h-1zM505 576h1v1h-1zM508 576h1v1h-1zM511 576h1v1h-1zM514 576h1v1h-1zM517 576h1v1h-1zM520 576h1v1h-1zM523 576h1v1h-1zM526 576h1v1h-1zM529 576h1v1h-1zM532 576h1v1h-1zM535 576h1v1h-1zM538 576h1v1h-1zM541 576h1v1h-1zM544 576h1v1h-1zM547 576h1v1h-1zM550 576h1v1h-1zM553 576h1v1h-1zM556 576h1v1h-1zM559 576h1v1h-1zM562 576h1v1h-1zM565 576h1v1h-1zM568 576h1v1h-1zM571 576h1v1h-1zM574 576h1v1h-1zM577 576h1v1h-1zM580 576h1v1h-1zM583 576h1v1h-1zM586 576h1v1h-1zM589 576h1v1h-1zM592 576h1v1h-1zM595 576h1v1h-1zM598 576h1v1h-1zM601 576h1v1h-1zM604 576h1v1h-1zM607 576h1v1h-1zM610 576h1v1h-1zM613 576h1v1h-1zM616 576h1v1h-1zM619 576h1v1h-1zM622 576h1v1h-1zM625 576h1v1h-1zM628 576h1v1h-1zM631 576h1v1h-1zM634 576h1v1h-1zM637 576h1v1h-1zM640 576h1v1h-1zM643 576h1v1h-1zM430 572h1v1h-1zM430 580h1v1h-1zM445 572h1v1h-1zM445 580h1v1h-1zM460 572h1v1h-1zM460 580h1v1h-1zM475 572h1v1h-1zM475 580h1v1h-1zM490 572h1v1h-1zM490 580h1v1h-1zM505 572h1v1h-1zM505 580h1v1h-1zM520 572h1v1h-1zM520 580h1v1h-1zM535 572h1v1h-1zM535 580h1v1h-1zM550 572h1v1h-1zM550 580h1v1h-1zM565 572h1v1h-1zM565 580h1v1h-1zM580 572h1v1h-1zM580 580h1v1h-1zM595 572h1v1h-1zM595 580h1v1h-1zM610 572h1v1h-1zM610 580h1v1h-1zM625 572h1v1h-1zM625 580h1v1h-1zM640 572h1v1h-1zM640 580h1v1h-1zM535 512h1v1h-1zM535 516h1v1h-1zM535 520h1v1h-1zM535 524h1v1h-1zM535 528h1v1h-1zM535 532h1v1h-1zM535 536h1v1h-1zM535 540h1v1h-1zM535 544h1v1h-1zM535 548h1v1h-1zM535 552h1v1h-1zM535 556h1v1h-1zM535 560h1v1h-1zM535 564h1v1h-1zM535 568h1v1h-1zM535 572h1v1h-1zM535 576h1v1h-1zM535 580h1v1h-1zM535 584h1v1h-1zM535 588h1v1h-1zM535 592h1v1h-1zM535 596h1v1h-1zM535 600h1v1h-1zM535 604h1v1h-1zM535 608h1v1h-1zM535 612h1v1h-1zM535 616h1v1h-1zM535 620h1v1h-1zM535 624h1v1h-1zM535 628h1v1h-1zM535 632h1v1h-1zM535 636h1v1h-1zM535 640h1v1h-1zM531 516h1v1h-1zM539 516h1v1h-1zM531 536h1v1h-1zM539 536h1v1h-1zM531 556h1v1h-1zM539 556h1v1h-1zM531 576h1v1h-1zM539 576h1v1h-1zM531 596h1v1h-1zM539 596h1v1h-1zM531 616h1v1h-1zM539 616h1v1h-1zM531 636h1v1h-1zM539 636h1v1h-1zM428 573h1v1h-1zM429 570h1v3h-1zM430 566h1v4h-1zM431 563h1v3h-1zM432 560h1v3h-1zM433 558h1v2h-1zM434 555h1v3h-1zM435 553h1v2h-1zM436 551h1v2h-1zM437 550h1v1h-1zM438 549h1v1h-1zM439 549h1v1h-1zM440 549h1v1h-1zM441 549h1v1h-1zM442 550h1v1h-1zM443 551h1v1h-1zM444 552h1v2h-1zM445 554h1v2h-1zM446 556h1v3h-1zM447 559h1v2h-1zM448 561h1v3h-1zM449 564h1v3h-1zM450 567h1v4h-1zM451 571h1v3h-1zM452 574h1v3h-1zM453 577h1v4h-1zM454 581h1v3h-1zM455 584h1v4h-1zM456 588h1v3h-1zM457 591h1v3h-1zM458 594h1v2h-1zM459 596h1v3h-1zM460 599h1v2h-1zM461 601h1v2h-1zM462 603h1v1h-1zM463 604h1v1h-1zM464 604h1v1h-1zM465 604h1v1h-1zM466 604h1v1h-1zM467 603h1v1h-1zM468 602h1v1h-1zM469 600h1v2h-1zM470 598h1v2h-1zM471 595h1v3h-1zM472 593h1v2h-1zM473 590h1v3h-1zM474 587h1v3h-1zM475 583h1v4h-1zM476 580h1v3h-1zM477 576h1v4h-1zM478 573h1v3h-1zM479 570h1v3h-1zM480 566h1v4h-1zM481 563h1v3h-1zM482 560h1v3h-1zM483 558h1v2h-1zM484 555h1v3h-1zM485 553h1v2h-1zM486 551h1v2h-1zM487 550h1v1h-1zM488 549h1v1h-1zM489 549h1v1h-1zM490 549h1v1h-1zM491 549h1v1h-1zM492 550h1v1h-1zM493 551h1v1h-1zM494 552h1v2h-1zM495 554h1v2h-1zM496 556h1v3h-1zM497 559h1v2h-1zM498 561h1v3h-1zM499 564h1v3h-1zM500 567h1v4h-1zM501 571h1v3h-1zM502 574h1v3h-1zM503 577h1v4h-1zM504 581h1v3h-1zM505 584h1v4h-1zM506 588h1v3h-1zM507 591h1v3h-1zM508 594h1v2h-1zM509 596h1v3h-1zM510 599h1v2h-1zM511 601h1v2h-1zM512 603h1v1h-1zM513 604h1v1h-1zM514 604h1v1h-1zM515 604h1v1h-1zM516 604h1v1h-1zM517 603h1v1h-1zM518 602h1v1h-1zM519 600h1v2h-1zM520 598h1v2h-1zM521 595h1v3h-1zM522 593h1v2h-1zM523 590h1v3h-1zM524 587h1v3h-1zM525 583h1v4h-1zM526 580h1v3h-1zM527 576h1v4h-1zM528 573h1v3h-1zM529 570h1v3h-1zM530 566h1v4h-1zM531 563h1v3h-1zM532 560h1v3h-1zM533 558h1v2h-1zM534 555h1v3h-1zM535 553h1v2h-1zM536 551h1v2h-1zM537 550h1v1h-1zM538 549h1v1h-1zM539 549h1v1h-1zM540 549h1v1h-1zM541 549h1v1h-1zM542 550h1v1h-1zM543 551h1v1h-1zM544 552h1v2h-1zM545 554h1v2h-1zM546 556h1v3h-1zM547 559h1v2h-1zM548 561h1v3h-1zM549 564h1v3h-1zM550 567h1v4h-1zM551 571h1v3h-1zM552 574h1v3h-1zM553 577h1v4h-1zM554 581h1v3h-1zM555 584h1v4h-1zM556 588h1v3h-1zM557 591h1v3h-1zM558 594h1v2h-1zM559 596h1v3h-1zM560 599h1v2h-1zM561 601h1v2h-1zM562 603h1v1h-1zM563 604h1v1h-1zM564 604h1v1h-1zM565 604h1v1h-1zM566 604h1v1h-1zM567 603h1v1h-1zM568 602h1v1h-1zM569 600h1v2h-1zM570 598h1v2h-1zM571 595h1v3h-1zM572 593h1v2h-1zM573 590h1v3h-1zM574 587h1v3h-1zM575 583h1v4h-1zM576 580h1v3h-1zM577 576h1v4h-1zM578 573h1v3h-1zM579 570h1v3h-1zM580 566h1v4h-1zM581 563h1v3h-1zM582 560h1v3h-1zM583 558h1v2h-1zM584 555h1v3h-1zM585 553h1v2h-1zM586 551h1v2h-1zM587 550h1v1h-1zM588 549h1v1h-1zM589 549h1v1h-1zM590 549h1v1h-1zM591 549h1v1h-1zM592 550h1v1h-1zM593 551h1v1h-1zM594 552h1v2h-1zM595 554h1v2h-1zM596 556h1v3h-1zM597 559h1v2h-1zM598 561h1v3h-1zM599 564h1v3h-1zM600 567h1v4h-1zM601 571h1v3h-1zM602 574h1v3h-1zM603 577h1v4h-1zM604 581h1v3h-1zM605 584h1v4h-1zM606 588h1v3h-1zM607 591h1v3h-1zM608 594h1v2h-1zM609 596h1v3h-1zM610 599h1v2h-1zM611 601h1v2h-1zM612 603h1v1h-1zM613 604h1v1h-1zM614 604h1v1h-1zM615 604h1v1h-1zM616 604h1v1h-1zM617 603h1v1h-1zM618 602h1v1h-1zM619 600h1v2h-1zM620 598h1v2h-1zM621 595h1v3h-1zM622 593h1v2h-1zM623 590h1v3h-1zM624 587h1v3h-1zM625 583h1v4h-1zM626 580h1v3h-1zM627 576h1v4h-1zM628 573h1v3h-1zM629 570h1v3h-1zM630 566h1v4h-1zM631 563h1v3h-1zM632 560h1v3h-1zM633 558h1v2h-1zM428 578h1v1h-1zM429 579h1v1h-1zM430 580h1v1h-1zM431 581h1v1h-1zM432 582h1v1h-1zM433 583h1v1h-1zM434 584h1v1h-1zM435 585h1v1h-1zM436 585h1v1h-1zM437 586h1v1h-1zM438 586h1v1h-1zM439 586h1v1h-1zM440 586h1v1h-1zM441 586h1v1h-1zM442 586h1v1h-1zM443 585h1v1h-1zM444 585h1v1h-1zM445 584h1v1h-1zM446 583h1v1h-1zM447 582h1v1h-1zM448 581h1v1h-1zM449 580h1v1h-1zM450 579h1v1h-1zM451 578h1v1h-1zM452 576h1v2h-1zM453 575h1v1h-1zM454 574h1v1h-1zM455 573h1v1h-1zM456 571h1v2h-1zM457 570h1v1h-1zM458 569h1v1h-1zM459 569h1v1h-1zM460 568h1v1h-1zM461 567h1v1h-1zM462 567h1v1h-1zM463 566h1v1h-1zM464 566h1v1h-1zM465 566h1v1h-1zM466 566h1v1h-1zM467 567h1v1h-1zM468 567h1v1h-1zM469 568h1v1h-1zM470 569h1v1h-1zM471 569h1v1h-1zM472 570h1v1h-1zM473 571h1v1h-1zM474 572h1v2h-1zM475 574h1v1h-1zM476 575h1v1h-1zM477 576h1v1h-1zM478 577h1v2h-1zM479 579h1v1h-1zM480 580h1v1h-1zM481 581h1v1h-1zM482 582h1v1h-1zM483 583h1v1h-1zM484 584h1v1h-1zM485 585h1v1h-1zM486 585h1v1h-1zM487 586h1v1h-1zM488 586h1v1h-1zM489 586h1v1h-1zM490 586h1v1h-1zM491 586h1v1h-1zM492 586h1v1h-1zM493 585h1v1h-1zM494 585h1v1h-1zM495 584h1v1h-1zM496 583h1v1h-1zM497 582h1v1h-1zM498 581h1v1h-1zM499 580h1v1h-1zM500 579h1v1h-1zM501 578h1v1h-1zM502 576h1v2h-1zM503 575h1v1h-1zM504 574h1v1h-1zM505 573h1v1h-1zM506 571h1v2h-1zM507 570h1v1h-1zM508 569h1v1h-1zM509 569h1v1h-1zM510 568h1v1h-1zM511 567h1v1h-1zM512 567h1v1h-1zM513 566h1v1h-1zM514 566h1v1h-1zM515 566h1v1h-1zM516 566h1v1h-1zM517 567h1v1h-1zM518 567h1v1h-1zM519 568h1v1h-1zM520 569h1v1h-1zM521 569h1v1h-1zM522 570h1v1h-1zM523 571h1v1h-1zM524 572h1v2h-1zM525 574h1v1h-1zM526 575h1v1h-1zM527 576h1v1h-1zM528 577h1v2h-1zM529 579h1v1h-1zM530 580h1v1h-1zM531 581h1v1h-1zM532 582h1v1h-1zM533 583h1v1h-1zM534 584h1v1h-1zM535 585h1v1h-1zM536 585h1v1h-1zM537 586h1v1h-1zM538 586h1v1h-1zM539 586h1v1h-1zM540 586h1v1h-1zM541 586h1v1h-1zM542 586h1v1h-1zM543 585h1v1h-1zM544 585h1v1h-1zM545 584h1v1h-1zM546 583h1v1h-1zM547 582h1v1h-1zM548 581h1v1h-1zM549 580h1v1h-1zM550 579h1v1h-1zM551 578h1v1h-1zM552 576h1v2h-1zM553 575h1v1h-1zM554 574h1v1h-1zM555 573h1v1h-1zM556 571h1v2h-1zM557 570h1v1h-1zM558 569h1v1h-1zM559 569h1v1h-1zM560 568h1v1h-1zM561 567h1v1h-1zM562 567h1v1h-1zM563 566h1v1h-1zM564 566h1v1h-1zM565 566h1v1h-1zM566 566h1v1h-1zM567 567h1v1h-1zM568 567h1v1h-1zM569 568h1v1h-1zM570 569h1v1h-1zM571 569h1v1h-1zM572 570h1v1h-1zM573 571h1v1h-1zM574 572h1v2h-1zM575 574h1v1h-1zM576 575h1v1h-1zM577 576h1v1h-1zM578 577h1v2h-1zM579 579h1v1h-1zM580 580h1v1h-1zM581 581h1v1h-1zM582 582h1v1h-1zM583 583h1v1h-1zM584 584h1v1h-1zM585 585h1v1h-1zM586 585h1v1h-1zM587 586h1v1h-1zM588 586h1v1h-1zM589 586h1v1h-1zM590 586h1v1h-1zM591 586h1v1h-1zM592 586h1v1h-1zM593 585h1v1h-1zM594 585h1v1h-1zM595 584h1v1h-1zM596 583h1v1h-1zM597 582h1v1h-1zM598 581h1v1h-1zM599 580h1v1h-1zM600 579h1v1h-1zM601 578h1v1h-1zM602 576h1v2h-1zM603 575h1v1h-1zM604 574h1v1h-1zM605 573h1v1h-1zM606 571h1v2h-1zM607 570h1v1h-1zM608 569h1v1h-1zM609 569h1v1h-1zM610 568h1v1h-1zM611 567h1v1h-1zM612 567h1v1h-1zM613 566h1v1h-1zM614 566h1v1h-1zM615 566h1v1h-1zM616 566h1v1h-1zM617 567h1v1h-1zM618 567h1v1h-1zM619 568h1v1h-1zM620 569h1v1h-1zM621 569h1v1h-1zM622 570h1v1h-1zM623 571h1v1h-1zM624 572h1v2h-1zM625 574h1v1h-1zM626 575h1v1h-1zM627 576h1v1h-1zM628 577h1v2h-1zM629 579h1v1h-1zM630 580h1v1h-1zM631 581h1v1h-1zM632 582h1v1h-1zM633 583h1v1h-1z" fill="#000" shape-rendering="crispEdges"/></svg>
<div style="position:absolute;left:651px;top:529px;width:123px;height:1px;background:#808080;"></div><div style="position:absolute;left:651px;top:530px;width:123px;height:1px;background:#fff;"></div>
<div style="position:absolute;left:651px;top:529px;width:1px;height:117px;background:#808080;"></div><div style="position:absolute;left:652px;top:529px;width:1px;height:117px;background:#fff;"></div>
<div style="position:absolute;left:651px;top:645px;width:244px;height:1px;background:#808080;"></div><div style="position:absolute;left:651px;top:646px;width:244px;height:1px;background:#fff;"></div>
<div style="position:absolute;left:775px;top:529px;width:119px;height:1px;background:#808080;"></div><div style="position:absolute;left:775px;top:530px;width:119px;height:1px;background:#fff;"></div>
<div style="position:absolute;left:774px;top:529px;width:1px;height:117px;background:#808080;"></div><div style="position:absolute;left:775px;top:529px;width:1px;height:117px;background:#fff;"></div>
<div style="position:absolute;left:893px;top:529px;width:1px;height:118px;background:#808080;"></div><div style="position:absolute;left:894px;top:529px;width:1px;height:118px;background:#fff;"></div>
<div style="position:absolute;left:651px;top:592px;width:123px;height:1px;background:#808080;"></div><div style="position:absolute;left:651px;top:593px;width:123px;height:1px;background:#fff;"></div>
<div style="position:absolute;left:775px;top:592px;width:119px;height:1px;background:#808080;"></div><div style="position:absolute;left:775px;top:593px;width:119px;height:1px;background:#fff;"></div>
<div style="position:absolute;left:655px;top:524px;white-space:nowrap;background:#C0C0C0;padding:0 3px 0 2px;font-size:10px;letter-spacing:-0.45px;line-height:12px;">Time base</div>
<div style="position:absolute;left:780px;top:524px;white-space:nowrap;background:#C0C0C0;padding:0 3px 0 2px;font-size:10px;letter-spacing:-0.45px;line-height:12px;">Trigger</div>
<div style="position:absolute;left:655px;top:587px;white-space:nowrap;background:#C0C0C0;padding:0 3px 0 2px;font-size:10px;letter-spacing:-0.45px;line-height:12px;">Channel A</div>
<div style="position:absolute;left:780px;top:587px;white-space:nowrap;background:#C0C0C0;padding:0 3px 0 2px;font-size:10px;letter-spacing:-0.45px;line-height:12px;">Channel B</div>
<div style="position:absolute;left:736px;top:509px;width:39px;height:13px;background:#C0C0C0;border-top:1px solid #fff;border-left:1px solid #fff;border-right:1px solid #808080;border-bottom:1px solid #808080;"></div><div style="position:absolute;left:736px;top:509px;width:39px;height:13px;line-height:13px;text-align:center;font-size:10px;letter-spacing:-0.3px;color:#000;white-space:nowrap;">Expand</div>
<div style="position:absolute;left:833px;top:510px;white-space:nowrap;font-size:10px;letter-spacing:-0.45px;line-height:12px;letter-spacing:-0.7px;">Ground</div>
<svg style="left:869px;top:509px" width="14" height="14"><circle cx="7" cy="7" r="5" fill="#C0C0C0" stroke="#808080" stroke-width="1"/><path d="M3.5 10.5 A5 5 0 0 0 10.5 3.5" fill="none" stroke="#fff" stroke-width="1.3"/><circle cx="7" cy="7" r="2.5" fill="#808080"/></svg>
<div style="position:absolute;left:655px;top:537px;width:110px;height:14px;background:#fff;border:1px solid #000;"></div><div style="position:absolute;left:658px;top:538px;white-space:nowrap;font-size:10px;letter-spacing:0.35px;line-height:14px;">0.10ms/div</div><div style="position:absolute;left:754px;top:538px;width:10px;height:12px;background:#000;"></div><div style="position:absolute;left:755px;top:538px;width:9px;height:6px;background:#ECE9D8;border-right:1px solid #ACA899;border-bottom:1px solid #ACA899;border-top:1px solid #fff;border-left:1px solid #fff;"></div><div style="position:absolute;left:755px;top:545px;width:9px;height:5px;background:#ECE9D8;border-right:1px solid #ACA899;border-bottom:1px solid #ACA899;border-top:1px solid #fff;border-left:1px solid #fff;"></div><svg style="left:754px;top:538px" width="10" height="12"><path d="M2 4.5 L5.5 1 L9 4.5 Z M2 8.5 L9 8.5 L5.5 12 Z" fill="#000"/></svg>
<div style="position:absolute;left:658px;top:553px;white-space:nowrap;font-size:10px;letter-spacing:-0.45px;line-height:12px;">X position</div>
<div style="position:absolute;left:705px;top:553px;width:60px;height:13px;background:#fff;border:1px solid #000;"></div><div style="position:absolute;left:710px;top:554px;white-space:nowrap;font-size:10px;letter-spacing:0.35px;line-height:13px;">0.00</div><div style="position:absolute;left:754px;top:554px;width:10px;height:11px;background:#000;"></div><div style="position:absolute;left:755px;top:554px;width:9px;height:5px;background:#ECE9D8;border-right:1px solid #ACA899;border-bottom:1px solid #ACA899;border-top:1px solid #fff;border-left:1px solid #fff;"></div><div style="position:absolute;left:755px;top:560px;width:9px;height:5px;background:#ECE9D8;border-right:1px solid #ACA899;border-bottom:1px solid #ACA899;border-top:1px solid #fff;border-left:1px solid #fff;"></div><svg style="left:754px;top:554px" width="10" height="11"><path d="M2 3.5 L5.5 0 L9 3.5 Z M2 7.5 L9 7.5 L5.5 11 Z" fill="#000"/></svg>
<div style="position:absolute;left:656px;top:569px;width:24px;height:13px;background:#404040;border-top:1px solid #808080;border-left:1px solid #808080;border-right:1px solid #fff;border-bottom:1px solid #fff;"></div><div style="position:absolute;left:656px;top:569px;width:24px;height:13px;line-height:13px;text-align:center;font-size:10px;letter-spacing:-0.3px;color:#8A8A8A;white-space:nowrap;">Y/T</div>
<div style="position:absolute;left:682px;top:569px;width:24px;height:13px;background:#C0C0C0;border-top:1px solid #fff;border-left:1px solid #fff;border-right:1px solid #808080;border-bottom:1px solid #808080;"></div><div style="position:absolute;left:682px;top:569px;width:24px;height:13px;line-height:13px;text-align:center;font-size:10px;letter-spacing:-0.3px;color:#000;white-space:nowrap;">B/A</div>
<div style="position:absolute;left:708px;top:569px;width:24px;height:13px;background:#C0C0C0;border-top:1px solid #fff;border-left:1px solid #fff;border-right:1px solid #808080;border-bottom:1px solid #808080;"></div><div style="position:absolute;left:708px;top:569px;width:24px;height:13px;line-height:13px;text-align:center;font-size:10px;letter-spacing:-0.3px;color:#000;white-space:nowrap;">A/B</div>
<div style="position:absolute;left:783px;top:540px;white-space:nowrap;font-size:10px;letter-spacing:-0.45px;line-height:12px;">Edge</div>
<div style="position:absolute;left:822px;top:539px;width:16px;height:10px;background:#404040;border-top:1px solid #808080;border-left:1px solid #808080;border-right:1px solid #fff;border-bottom:1px solid #fff;"></div><div style="position:absolute;left:822px;top:539px;width:16px;height:10px;line-height:10px;text-align:center;font-size:10px;letter-spacing:-0.3px;color:#8A8A8A;white-space:nowrap;"></div>
<div style="position:absolute;left:842px;top:539px;width:16px;height:10px;background:#C0C0C0;border-top:1px solid #fff;border-left:1px solid #fff;border-right:1px solid #808080;border-bottom:1px solid #808080;"></div><div style="position:absolute;left:842px;top:539px;width:16px;height:10px;line-height:10px;text-align:center;font-size:10px;letter-spacing:-0.3px;color:#000;white-space:nowrap;"></div>
<svg style="left:822px;top:539px" width="36" height="11"><path d="M4 8.5 H8.5 V2.5 H12" fill="none" stroke="#909090" stroke-width="1"/><path d="M8 7 L10 4" stroke="#909090"/><path d="M23.5 2.5 H27.5 L29 6.5 V8.5 H34" fill="none" stroke="#000" stroke-width="1.4"/></svg>
<svg style="left:869px;top:537px" width="14" height="14"><circle cx="7" cy="7" r="5" fill="#C0C0C0" stroke="#808080" stroke-width="1"/><path d="M3.5 10.5 A5 5 0 0 0 10.5 3.5" fill="none" stroke="#fff" stroke-width="1.3"/><circle cx="7" cy="7" r="2.5" fill="#808080"/></svg>
<div style="position:absolute;left:783px;top:554px;white-space:nowrap;font-size:10px;letter-spacing:-0.45px;line-height:12px;">Level</div>
<div style="position:absolute;left:819px;top:553px;width:60px;height:13px;background:#fff;border:1px solid #000;"></div><div style="position:absolute;left:825px;top:554px;white-space:nowrap;font-size:10px;letter-spacing:0.35px;line-height:13px;">0.00</div><div style="position:absolute;left:868px;top:554px;width:10px;height:11px;background:#000;"></div><div style="position:absolute;left:869px;top:554px;width:9px;height:5px;background:#ECE9D8;border-right:1px solid #ACA899;border-bottom:1px solid #ACA899;border-top:1px solid #fff;border-left:1px solid #fff;"></div><div style="position:absolute;left:869px;top:560px;width:9px;height:5px;background:#ECE9D8;border-right:1px solid #ACA899;border-bottom:1px solid #ACA899;border-top:1px solid #fff;border-left:1px solid #fff;"></div><svg style="left:868px;top:554px" width="10" height="11"><path d="M2 3.5 L5.5 0 L9 3.5 Z M2 7.5 L9 7.5 L5.5 11 Z" fill="#000"/></svg>
<div style="position:absolute;left:782px;top:569px;width:29px;height:13px;background:#404040;border-top:1px solid #808080;border-left:1px solid #808080;border-right:1px solid #fff;border-bottom:1px solid #fff;"></div><div style="position:absolute;left:782px;top:569px;width:29px;height:13px;line-height:13px;text-align:center;font-size:10px;letter-spacing:-0.3px;color:#8A8A8A;white-space:nowrap;">Auto</div>
<div style="position:absolute;left:813px;top:569px;width:14px;height:13px;background:#C0C0C0;border-top:1px solid #fff;border-left:1px solid #fff;border-right:1px solid #808080;border-bottom:1px solid #808080;"></div><div style="position:absolute;left:813px;top:569px;width:14px;height:13px;line-height:13px;text-align:center;font-size:10px;letter-spacing:-0.3px;color:#000;white-space:nowrap;">A</div>
<div style="position:absolute;left:829px;top:569px;width:13px;height:13px;background:#C0C0C0;border-top:1px solid #fff;border-left:1px solid #fff;border-right:1px solid #808080;border-bottom:1px solid #808080;"></div><div style="position:absolute;left:829px;top:569px;width:13px;height:13px;line-height:13px;text-align:center;font-size:10px;letter-spacing:-0.3px;color:#000;white-space:nowrap;">B</div>
<div style="position:absolute;left:844px;top:569px;width:23px;height:13px;background:#C0C0C0;border-top:1px solid #fff;border-left:1px solid #fff;border-right:1px solid #808080;border-bottom:1px solid #808080;"></div><div style="position:absolute;left:844px;top:569px;width:23px;height:13px;line-height:13px;text-align:center;font-size:10px;letter-spacing:-0.3px;color:#000;white-space:nowrap;">Ext</div>
<div style="position:absolute;left:655px;top:599px;width:110px;height:14px;background:#fff;border:1px solid #000;"></div><div style="position:absolute;left:661px;top:600px;white-space:nowrap;font-size:10px;letter-spacing:0.35px;line-height:14px;">10 mV/Div</div><div style="position:absolute;left:754px;top:600px;width:10px;height:12px;background:#000;"></div><div style="position:absolute;left:755px;top:600px;width:9px;height:6px;background:#ECE9D8;border-right:1px solid #ACA899;border-bottom:1px solid #ACA899;border-top:1px solid #fff;border-left:1px solid #fff;"></div><div style="position:absolute;left:755px;top:607px;width:9px;height:5px;background:#ECE9D8;border-right:1px solid #ACA899;border-bottom:1px solid #ACA899;border-top:1px solid #fff;border-left:1px solid #fff;"></div><svg style="left:754px;top:600px" width="10" height="12"><path d="M2 4.5 L5.5 1 L9 4.5 Z M2 8.5 L9 8.5 L5.5 12 Z" fill="#000"/></svg>
<div style="position:absolute;left:659px;top:615px;white-space:nowrap;font-size:10px;letter-spacing:-0.45px;line-height:12px;">Y position</div>
<div style="position:absolute;left:705px;top:614px;width:60px;height:14px;background:#fff;border:1px solid #000;"></div><div style="position:absolute;left:710px;top:615px;white-space:nowrap;font-size:10px;letter-spacing:0.35px;line-height:14px;">0.00</div><div style="position:absolute;left:754px;top:615px;width:10px;height:12px;background:#000;"></div><div style="position:absolute;left:755px;top:615px;width:9px;height:6px;background:#ECE9D8;border-right:1px solid #ACA899;border-bottom:1px solid #ACA899;border-top:1px solid #fff;border-left:1px solid #fff;"></div><div style="position:absolute;left:755px;top:622px;width:9px;height:5px;background:#ECE9D8;border-right:1px solid #ACA899;border-bottom:1px solid #ACA899;border-top:1px solid #fff;border-left:1px solid #fff;"></div><svg style="left:754px;top:615px" width="10" height="12"><path d="M2 4.5 L5.5 1 L9 4.5 Z M2 8.5 L9 8.5 L5.5 12 Z" fill="#000"/></svg>
<div style="position:absolute;left:655px;top:630px;width:20px;height:13px;background:#C0C0C0;border-top:1px solid #fff;border-left:1px solid #fff;border-right:1px solid #808080;border-bottom:1px solid #808080;"></div><div style="position:absolute;left:655px;top:630px;width:20px;height:13px;line-height:13px;text-align:center;font-size:10px;letter-spacing:-0.3px;color:#000;white-space:nowrap;">AC</div>
<div style="position:absolute;left:677px;top:630px;width:12px;height:13px;background:#C0C0C0;border-top:1px solid #fff;border-left:1px solid #fff;border-right:1px solid #808080;border-bottom:1px solid #808080;"></div><div style="position:absolute;left:677px;top:630px;width:12px;height:13px;line-height:13px;text-align:center;font-size:10px;letter-spacing:-0.3px;color:#000;white-space:nowrap;">0</div>
<div style="position:absolute;left:691px;top:630px;width:20px;height:13px;background:#404040;border-top:1px solid #808080;border-left:1px solid #808080;border-right:1px solid #fff;border-bottom:1px solid #fff;"></div><div style="position:absolute;left:691px;top:630px;width:20px;height:13px;line-height:13px;text-align:center;font-size:10px;letter-spacing:0.5px;color:#8A8A8A;white-space:nowrap;">DC</div>
<svg style="left:737px;top:630px" width="14" height="14"><circle cx="7" cy="7" r="5" fill="#C0C0C0" stroke="#808080" stroke-width="1"/><path d="M3.5 10.5 A5 5 0 0 0 10.5 3.5" fill="none" stroke="#fff" stroke-width="1.3"/><circle cx="7" cy="7" r="2.5" fill="#808080"/></svg>
<div style="position:absolute;left:779px;top:599px;width:110px;height:14px;background:#fff;border:1px solid #000;"></div><div style="position:absolute;left:786px;top:600px;white-space:nowrap;font-size:10px;letter-spacing:0.35px;line-height:14px;">1&nbsp; V/Div</div><div style="position:absolute;left:878px;top:600px;width:10px;height:12px;background:#000;"></div><div style="position:absolute;left:879px;top:600px;width:9px;height:6px;background:#ECE9D8;border-right:1px solid #ACA899;border-bottom:1px solid #ACA899;border-top:1px solid #fff;border-left:1px solid #fff;"></div><div style="position:absolute;left:879px;top:607px;width:9px;height:5px;background:#ECE9D8;border-right:1px solid #ACA899;border-bottom:1px solid #ACA899;border-top:1px solid #fff;border-left:1px solid #fff;"></div><svg style="left:878px;top:600px" width="10" height="12"><path d="M2 4.5 L5.5 1 L9 4.5 Z M2 8.5 L9 8.5 L5.5 12 Z" fill="#000"/></svg>
<div style="position:absolute;left:783px;top:615px;white-space:nowrap;font-size:10px;letter-spacing:-0.45px;line-height:12px;">Y position</div>
<div style="position:absolute;left:829px;top:614px;width:60px;height:14px;background:#fff;border:1px solid #000;"></div><div style="position:absolute;left:834px;top:615px;white-space:nowrap;font-size:10px;letter-spacing:0.35px;line-height:14px;">0.00</div><div style="position:absolute;left:878px;top:615px;width:10px;height:12px;background:#000;"></div><div style="position:absolute;left:879px;top:615px;width:9px;height:6px;background:#ECE9D8;border-right:1px solid #ACA899;border-bottom:1px solid #ACA899;border-top:1px solid #fff;border-left:1px solid #fff;"></div><div style="position:absolute;left:879px;top:622px;width:9px;height:5px;background:#ECE9D8;border-right:1px solid #ACA899;border-bottom:1px solid #ACA899;border-top:1px solid #fff;border-left:1px solid #fff;"></div><svg style="left:878px;top:615px" width="10" height="12"><path d="M2 4.5 L5.5 1 L9 4.5 Z M2 8.5 L9 8.5 L5.5 12 Z" fill="#000"/></svg>
<div style="position:absolute;left:781px;top:630px;width:20px;height:13px;background:#C0C0C0;border-top:1px solid #fff;border-left:1px solid #fff;border-right:1px solid #808080;border-bottom:1px solid #808080;"></div><div style="position:absolute;left:781px;top:630px;width:20px;height:13px;line-height:13px;text-align:center;font-size:10px;letter-spacing:-0.3px;color:#000;white-space:nowrap;">AC</div>
<div style="position:absolute;left:803px;top:630px;width:12px;height:13px;background:#C0C0C0;border-top:1px solid #fff;border-left:1px solid #fff;border-right:1px solid #808080;border-bottom:1px solid #808080;"></div><div style="position:absolute;left:803px;top:630px;width:12px;height:13px;line-height:13px;text-align:center;font-size:10px;letter-spacing:-0.3px;color:#000;white-space:nowrap;">0</div>
<div style="position:absolute;left:817px;top:630px;width:20px;height:13px;background:#404040;border-top:1px solid #808080;border-left:1px solid #808080;border-right:1px solid #fff;border-bottom:1px solid #fff;"></div><div style="position:absolute;left:817px;top:630px;width:20px;height:13px;line-height:13px;text-align:center;font-size:10px;letter-spacing:0.5px;color:#8A8A8A;white-space:nowrap;">DC</div>
<svg style="left:858px;top:630px" width="14" height="14"><circle cx="7" cy="7" r="5" fill="#C0C0C0" stroke="#808080" stroke-width="1"/><path d="M3.5 10.5 A5 5 0 0 0 10.5 3.5" fill="none" stroke="#fff" stroke-width="1.3"/><circle cx="7" cy="7" r="2.5" fill="#808080"/></svg>
<div style="position:absolute;left:0px;top:738px;width:1024px;height:30px;background:linear-gradient(to bottom,#1F55D0 0px,#1F55D0 1px,#4A8CF0 1.5px,#3F83EE 3px,#2C6EE4 5px,#2861DE 8px,#245BD8 24px,#1E4FC0 27px,#1A44AA 30px);"></div>
<div style="position:absolute;left:0px;top:738px;width:97px;height:30px;border-radius:0 12px 12px 0;background:linear-gradient(to bottom,#3C8F3C 0px,#5DBA5D 2px,#42A042 6px,#3A933A 20px,#327F32 30px);box-shadow:inset -3px 0 4px rgba(0,40,0,0.35);"></div>
<svg style="left:9px;top:744px" width="22" height="20"><path d="M2 3 Q6 1 10 3 L9 9 Q5 7 1 9 Z" fill="#E5562B"/><path d="M11 3 Q15 5 20 3 L19 9 Q14 11 10 9 Z" fill="#5FC02C"/><path d="M1 10 Q5 8 9 10 L8 16 Q4 14 0 16 Z" fill="#3D8AE8"/><path d="M10 10 Q14 12 19 10 L18 16 Q13 18 9 16 Z" fill="#F4C21A"/></svg>
<div style="position:absolute;left:34px;top:743px;white-space:nowrap;font-size:18px;font-weight:bold;font-style:italic;color:#fff;text-shadow:1px 1px 1px #1A4A1A;letter-spacing:-1px;">пуск</div>
<div style="position:absolute;left:105px;top:741px;width:154px;height:25px;border-radius:3px;background:#1E4FB8;box-shadow:inset 1px 1px 1px #103080;"></div><div style="position:absolute;left:135px;top:747px;white-space:nowrap;font-size:11px;color:#fff;">Electronics Workben...</div><svg style="left:113px;top:743px" width="20" height="22"><rect x="5" y="4" width="13" height="11.5" fill="#0A1A8A"/><path d="M5 8 Q6.5 4 8 5.5 Q9 7 10 8 Q11.5 9 12.5 6 Q13.5 4 15 5.5 Q16 7.5 18 8" fill="none" stroke="#E8E040" stroke-width="1.2"/><path d="M10 12.5 H12 V10.5 H14 V12.5 H16 V10.5 H18" fill="none" stroke="#20D8F0" stroke-width="1.2"/><circle cx="7" cy="15" r="4.9" fill="#E80000"/><circle cx="5.7" cy="13.2" r="1.2" fill="#fff"/></svg>
<div style="position:absolute;left:260px;top:741px;width:153px;height:25px;border-radius:3px;background:linear-gradient(to bottom,#4A8CF2 0px,#3C81F3 3px,#3776EE 20px,#2E63D8 25px);box-shadow:inset -1px -1px 0 #1F4AB0,inset 1px 1px 0 #6EA2F7;"></div><div style="position:absolute;left:289px;top:747px;white-space:nowrap;font-size:11px;color:#fff;">Исправленная мет...</div><svg style="left:269px;top:744px" width="18" height="18"><rect x="5" y="2" width="12" height="15" fill="#303848"/><rect x="4" y="1" width="12" height="15" fill="#E4ECFA" stroke="#9AA8C0" stroke-width="0.6"/><path d="M12 12.5h3M12 9h3M6 14h8" stroke="#8CA0C8" stroke-width="0.8"/><rect x="0.6" y="2.6" width="9.8" height="9.8" fill="#fff" stroke="#1E3C9A" stroke-width="1.2"/><path d="M2.3 4.5 L3.6 10.5 L5.4 6 L6.8 10.5 L8.8 4.5" fill="none" stroke="#0A1E78" stroke-width="1.6"/></svg>
<div style="position:absolute;left:414px;top:741px;width:154px;height:25px;border-radius:3px;background:linear-gradient(to bottom,#4A8CF2 0px,#3C81F3 3px,#3776EE 20px,#2E63D8 25px);box-shadow:inset -1px -1px 0 #1F4AB0,inset 1px 1px 0 #6EA2F7;"></div><div style="position:absolute;left:443px;top:747px;white-space:nowrap;font-size:11px;color:#fff;">Практикум - Micros...</div><svg style="left:423px;top:744px" width="18" height="18"><rect x="5" y="2" width="12" height="15" fill="#303848"/><rect x="4" y="1" width="12" height="15" fill="#E4ECFA" stroke="#9AA8C0" stroke-width="0.6"/><path d="M12 12.5h3M12 9h3M6 14h8" stroke="#8CA0C8" stroke-width="0.8"/><rect x="0.6" y="2.6" width="9.8" height="9.8" fill="#fff" stroke="#1E3C9A" stroke-width="1.2"/><path d="M2.3 4.5 L3.6 10.5 L5.4 6 L6.8 10.5 L8.8 4.5" fill="none" stroke="#0A1E78" stroke-width="1.6"/></svg>
<div style="position:absolute;left:569px;top:741px;width:154px;height:25px;border-radius:3px;background:linear-gradient(to bottom,#4A8CF2 0px,#3C81F3 3px,#3776EE 20px,#2E63D8 25px);box-shadow:inset -1px -1px 0 #1F4AB0,inset 1px 1px 0 #6EA2F7;"></div><div style="position:absolute;left:598px;top:747px;white-space:nowrap;font-size:11px;color:#fff;">Документ1 - Micros...</div><svg style="left:578px;top:744px" width="18" height="18"><rect x="5" y="2" width="12" height="15" fill="#303848"/><rect x="4" y="1" width="12" height="15" fill="#E4ECFA" stroke="#9AA8C0" stroke-width="0.6"/><path d="M12 12.5h3M12 9h3M6 14h8" stroke="#8CA0C8" stroke-width="0.8"/><rect x="0.6" y="2.6" width="9.8" height="9.8" fill="#fff" stroke="#1E3C9A" stroke-width="1.2"/><path d="M2.3 4.5 L3.6 10.5 L5.4 6 L6.8 10.5 L8.8 4.5" fill="none" stroke="#0A1E78" stroke-width="1.6"/></svg>
<div style="position:absolute;left:724px;top:741px;width:154px;height:25px;border-radius:3px;background:linear-gradient(to bottom,#4A8CF2 0px,#3C81F3 3px,#3776EE 20px,#2E63D8 25px);box-shadow:inset -1px -1px 0 #1F4AB0,inset 1px 1px 0 #6EA2F7;"></div><div style="position:absolute;left:753px;top:747px;white-space:nowrap;font-size:11px;color:#fff;">Практикум.pdf - Fo...</div><svg style="left:732px;top:745px" width="18" height="18"><rect x="1.5" y="1.5" width="15" height="15" rx="2" fill="#fff" stroke="#8090A8"/><path d="M3 14 Q8 8 15 5" stroke="#F08020" stroke-width="3" fill="none"/></svg>
<div style="position:absolute;left:887px;top:745px;width:13px;height:16px;background:#8A9A72;"></div>
<div style="position:absolute;left:887px;top:747px;white-space:nowrap;font-size:11px;color:#fff;letter-spacing:-1px;">EN</div>
<div style="position:absolute;left:913px;top:738px;width:111px;height:30px;background:linear-gradient(to bottom,#1290E8 0px,#19B9F3 1px,#0DA5EE 4px,#0B9AE8 24px,#0A7FD0 30px);border-left:1px solid #095BC9;"></div>
<svg style="left:903px;top:743px" width="22" height="22"><defs><radialGradient id="ag" cx="35%" cy="30%" r="75%"><stop offset="0" stop-color="#8CCBFF"/><stop offset="0.5" stop-color="#2E8EF0"/><stop offset="1" stop-color="#0A50C8"/></radialGradient></defs><circle cx="10.3" cy="10.2" r="9" fill="url(#ag)" stroke="#A8C8F0" stroke-width="0.8"/><path d="M12.3 5.8 L8 10.2 L12.3 14.6" fill="none" stroke="#fff" stroke-width="2.4"/></svg>
<svg style="left:924px;top:745px" width="18" height="18"><defs><radialGradient id="yg" cx="40%" cy="35%" r="70%"><stop offset="0" stop-color="#FFE860"/><stop offset="1" stop-color="#E8A000"/></radialGradient></defs><circle cx="8" cy="8" r="7.6" fill="url(#yg)"/><circle cx="8" cy="8" r="5.2" fill="none" stroke="#A86000" stroke-width="1.2"/><circle cx="8" cy="8" r="2.2" fill="none" stroke="#704000" stroke-width="1.3"/><path d="M10.2 7 V10 Q11 11.5 12.5 10.5" fill="none" stroke="#704000" stroke-width="1.2"/></svg>
<svg style="left:942px;top:744px" width="18" height="18"><path d="M1 16.5 L1.5 8 Q2 1.5 9 1.5 L15.5 1.5 L15 9 Q14.5 16 8 16.5 Z" fill="#2A9A3A" stroke="#106020" stroke-width="1"/><ellipse cx="8.3" cy="9" rx="5" ry="4.6" fill="#fff"/><circle cx="8.3" cy="9" r="3" fill="#60C840"/><circle cx="8.3" cy="9" r="1.2" fill="#106020"/></svg>
<svg style="left:960px;top:745px" width="18" height="18"><circle cx="8" cy="8" r="7" fill="#E8E8E8" stroke="#1010B0" stroke-width="2"/><path d="M5.5 4.5 H9 L11 6.5 V11.5 H5.5 Z" fill="#fff" stroke="#000" stroke-width="1"/></svg>
<div style="position:absolute;left:983px;top:746px;white-space:nowrap;font-size:11px;color:#fff;">11:20</div>
</body></html>
